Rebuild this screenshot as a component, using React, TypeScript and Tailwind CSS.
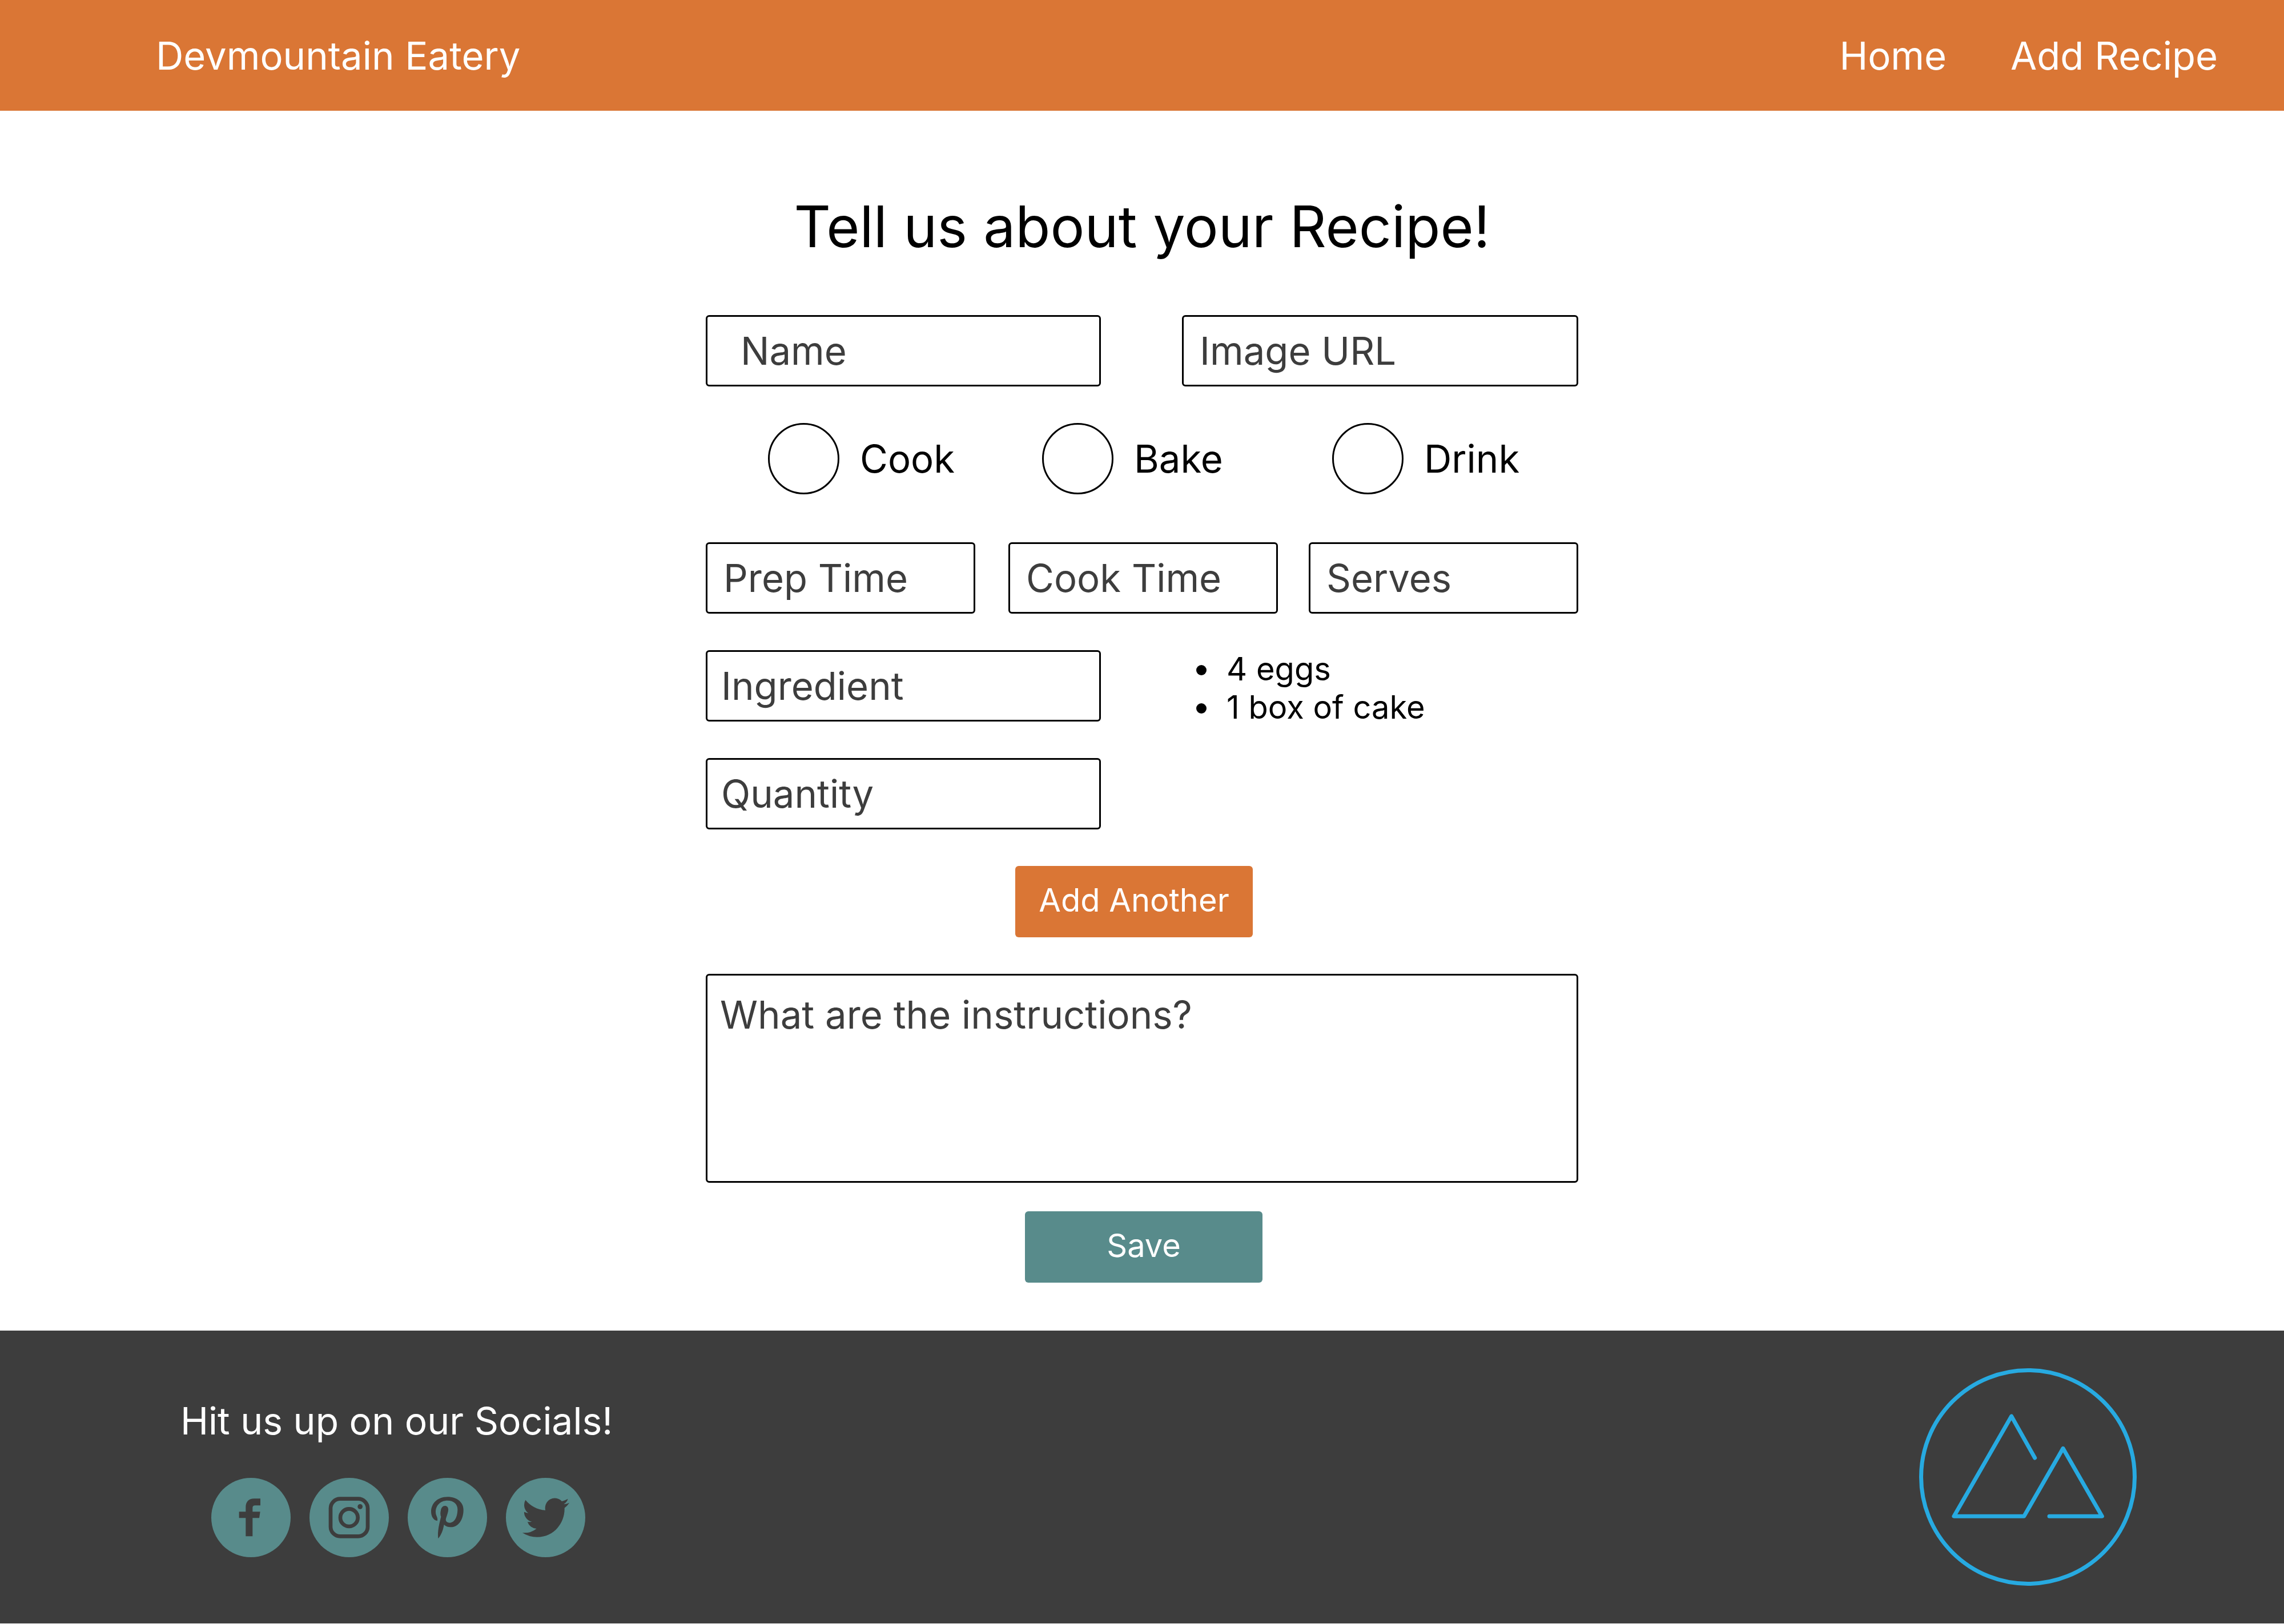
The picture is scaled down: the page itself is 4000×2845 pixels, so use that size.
import type { ComponentProps, ReactNode } from "react";

const fieldClass =
  "block h-[125px] rounded-md border-3 border-black bg-white pr-4 text-[67px] leading-[81px] text-[#3d3d3d] placeholder:text-[#3d3d3d] placeholder:opacity-100 outline-none";

function Field({ label, className }: { label: string; className: string }) {
  return <input type="text" aria-label={label} placeholder={label} className={`${fieldClass} ${className}`} />;
}

function Radio({ label }: { label: string }) {
  return (
    <label className="flex items-center gap-9 text-[67px] leading-[81px] text-black">
      <input
        type="radio"
        name="recipe-type"
        className="size-[125px] shrink-0 appearance-none rounded-full border-3 border-black bg-white checked:bg-[#588b8b]"
      />
      {label}
    </label>
  );
}

function ActionButton({ className, ...props }: ComponentProps<"button"> & { className: string }) {
  return (
    <button
      className={`flex h-[125px] w-[416px] items-center justify-center rounded-md pb-1 text-[56px] leading-[67px] text-white ${className}`}
      {...props}
    />
  );
}

function SocialLink({ label, viewBox, children }: { label: string; viewBox: string; children: ReactNode }) {
  return (
    <a href="#" aria-label={label} className="block size-[139px] rounded-full bg-[#588b8b] text-[#3d3d3d]">
      <svg viewBox={viewBox} className="size-full" fill="currentColor" aria-hidden="true">
        {children}
      </svg>
    </a>
  );
}

function MountainLogo() {
  return (
    <svg
      viewBox="63 81 1143 1143"
      className="size-[381px]"
      fill="none"
      stroke="#27aae1"
      strokeWidth="21"
      strokeLinecap="round"
      strokeLinejoin="round"
      role="img"
      aria-label="Devmountain"
    >
      <circle cx="634.5" cy="652.5" r="561" />
      <path d="M671 552 548 333 246 859H614L819 502 1024 859H747" />
    </svg>
  );
}

export default function App() {
  return (
    <div className="flex flex-col bg-white font-['Inter',sans-serif] text-black">
      <header className="flex h-[194px] items-center justify-between bg-[#da7635] pr-[116px] pl-[273px] text-[67px] leading-[81px] text-white">
        <a href="#">Devmountain Eatery</a>
        <nav className="flex gap-28">
          <a href="#">Home</a>
          <a href="#">Add Recipe</a>
        </nav>
      </header>

      <main className="mx-auto w-full max-w-[1528px] pt-[142px] pb-[84px]">
        <h1 className="text-center text-[100px] leading-[121px]">Tell us about your Recipe!</h1>

        <form className="mt-[95px] flex flex-col" onSubmit={(e) => e.preventDefault()}>
          <div className="flex justify-between">
            <Field label="Name" className="w-[692px] pl-[58px]" />
            <Field label="Image URL" className="w-[694px] pl-7" />
          </div>

          <div className="mt-16 grid grid-cols-[480px_508px_auto] pl-[109px]">
            <Radio label="Cook" />
            <Radio label="Bake" />
            <Radio label="Drink" />
          </div>

          <div className="mt-21 flex">
            <Field label="Prep Time" className="w-[472px] pl-7" />
            <Field label="Cook Time" className="ml-[58px] w-[472px] pl-7" />
            <Field label="Serves" className="ml-auto w-[472px] pl-7" />
          </div>

          <div className="mt-16 flex justify-between">
            <div className="flex flex-col gap-16">
              <Field label="Ingredient" className="w-[692px] pl-6" />
              <Field label="Quantity" className="w-[692px] pl-6" />
            </div>
            <ul className="w-[694px] list-disc pl-[68px] text-[56px] leading-[67px]">
              <li className="pl-2.5">4 eggs</li>
              <li className="pl-2.5">1 box of cake</li>
            </ul>
          </div>

          <ActionButton type="button" className="mt-16 mr-7 self-center bg-[#da7635]">
            Add Another
          </ActionButton>

          <textarea
            aria-label="What are the instructions?"
            placeholder="What are the instructions?"
            className="mt-16 block h-[366px] w-full resize-none rounded-md border-3 border-black bg-white px-[22px] pt-7 text-[67px] leading-[81px] text-[#3d3d3d] outline-none placeholder:text-[#3d3d3d] placeholder:opacity-100"
          />

          <ActionButton type="submit" className="mt-[50px] ml-1.5 self-center bg-[#588b8b]">
            Save
          </ActionButton>
        </form>
      </main>

      <footer className="flex items-start justify-between bg-[#3d3d3d] pt-[66px] pr-[258px] pb-[66px] pl-[316px]">
        <div className="pt-[52px]">
          <p className="text-[66px] leading-[81px] text-white">Hit us up on our Socials!</p>
          <div className="mt-[59px] ml-[54px] flex gap-[33px]">
            <SocialLink label="Facebook" viewBox="89 86 417 417">
              <path d="M270 393V297H235V264H270V240C270 212 286 195 313 195H347V231H319C310 231 306 236 306 244V264H346L341 297H306V393Z" />
            </SocialLink>
            <SocialLink label="Instagram" viewBox="605 86 417 417">
              <rect x="716" y="196" width="195" height="197" rx="50" fill="none" stroke="currentColor" strokeWidth="20" />
              <circle cx="813" cy="295" r="46" fill="none" stroke="currentColor" strokeWidth="20" />
              <circle cx="871" cy="237" r="13" />
            </SocialLink>
            <SocialLink label="Pinterest" viewBox="72 86 417 417">
              <path d="M228 311C208 310 195 289 195 263C195 219 230 186 281 186C333 186 365 216 365 254C365 306 338 345 300 345C284 345 270 340 263 331C257 362 250 383 232 405C229 374 233 345 247 291C243 280 243 269 246 257C248 242 257 233 267 233C280 233 287 243 285 257C284 270 274 293 272 306C273 317 282 323 295 322C322 320 334 285 334 252C334 223 313 205 281 205C245 205 219 230 219 265C219 285 231 292 228 311Z" />
            </SocialLink>
            <SocialLink label="Twitter" viewBox="588 86 417 417">
              <path
                transform="translate(674 169) scale(10.3 10.5)"
                d="M23.953 4.57a10 10 0 01-2.825.775 4.958 4.958 0 002.163-2.723c-.951.555-2.005.959-3.127 1.184a4.92 4.92 0 00-8.384 4.482C7.69 8.095 4.067 6.13 1.64 3.162a4.822 4.822 0 00-.666 2.475c0 1.71.87 3.213 2.188 4.096a4.904 4.904 0 01-2.228-.616v.06a4.923 4.923 0 003.946 4.827 4.996 4.996 0 01-2.212.085 4.936 4.936 0 004.604 3.417 9.867 9.867 0 01-6.102 2.105c-.39 0-.779-.023-1.17-.067a13.995 13.995 0 007.557 2.209c9.053 0 13.998-7.496 13.998-13.985 0-.21 0-.42-.015-.63A9.935 9.935 0 0024 4.59z"
              />
            </SocialLink>
          </div>
        </div>
        <MountainLogo />
      </footer>
    </div>
  );
}
